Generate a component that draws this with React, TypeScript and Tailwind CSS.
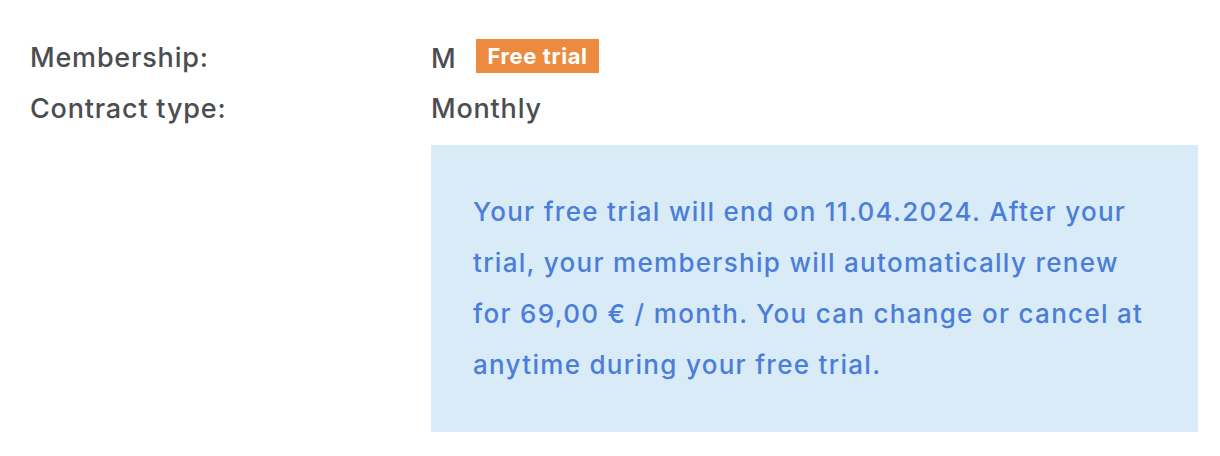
export default function App() {
  return (
    <div className="min-h-[456px] w-[1220px] bg-white font-['Inter',sans-serif] font-medium text-[#4b4d50]">
      <div className="flex pt-[40px] pl-[30px]">
        <div className="w-[401px] shrink-0 text-[27px] tracking-[0.8px]">
          <div className="h-[34px] flex items-center pt-[2px]">Membership:</div>
          <div className="mt-[17px] h-[34px] flex items-center pt-[2px]">Contract type:</div>
        </div>
        <div className="flex flex-col">
          <div className="h-[34px] flex items-start gap-[20px] text-[27px] tracking-[0.8px]">
            <span className="leading-[34px] pt-[2px]">M</span>
            <span className="-mt-[1px] bg-[#ec8b3f] text-white font-bold text-[22px] tracking-[0.6px] leading-[34px] px-[11px]">Free trial</span>
          </div>
          <div className="mt-[17px] h-[34px] flex items-center pt-[2px] text-[27px] tracking-[0.8px]">Monthly</div>
          <div className="mt-[20px] w-[767px] h-[287px] bg-[#d9ebf7] px-[42px] pt-[41px] text-[#4a7ed9] text-[26px] tracking-[1.3px] leading-[51px]">
            Your free trial will end on 11.04.2024. After your
            <br />
            trial, your membership will automatically renew
            <br />
            for 69,00 € / month. You can change or cancel at
            <br />
            anytime during your free trial.
          </div>
        </div>
      </div>
    </div>
  );
}
